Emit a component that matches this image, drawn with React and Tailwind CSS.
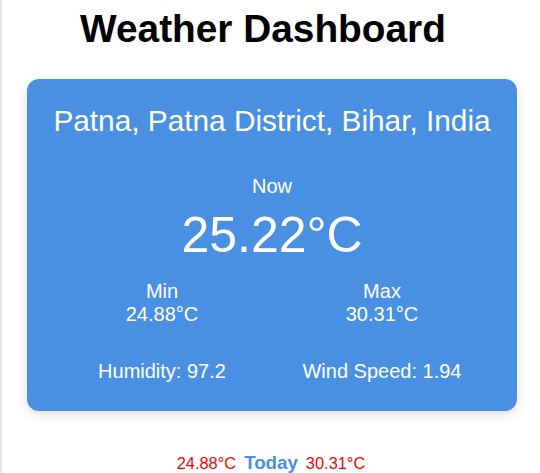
import React from "react";

const weather = {
  location: "Patna, Patna District, Bihar, India",
  temp: "25.22°C",
  min: "24.88°C",
  max: "30.31°C",
  humidity: "97.2",
  wind: "1.94",
};

const Stat = ({ label, value }) => (
  <div className="flex flex-col items-center text-[20px] leading-[1.15]">
    <span>{label}</span>
    <span>{value}</span>
  </div>
);

export default function App() {
  return (
    <div
      className="min-h-screen bg-white border-l-2 border-[#e6e6e6]"
      style={{ fontFamily: '"Liberation Sans", Arial, sans-serif' }}
    >
      <h1 className="pt-[7px] pr-[16px] text-center text-[38.8px] leading-[1.15] font-bold text-black">
        Weather Dashboard
      </h1>

      <div className="mt-[27px] ml-[25px] mr-[23px] rounded-xl bg-[#4a90e2] px-[20px] pt-[25px] pb-[28px] text-white shadow-[0_4px_12px_rgba(0,0,0,0.12)]">
        <h2 className="whitespace-nowrap text-center text-[29.8px] leading-[1.15]">{weather.location}</h2>

        <div className="mt-[37px] flex flex-col items-center">
          <p className="text-[20px] leading-[1.15]">Now</p>
          <p className="mt-[9px] text-[50px] leading-[1.15]">{weather.temp}</p>
        </div>

        <div className="mt-[16px] grid grid-cols-2 px-[5px]">
          <Stat label="Min" value={weather.min} />
          <Stat label="Max" value={weather.max} />
        </div>

        <div className="mt-[34px] grid grid-cols-2 px-[5px] text-[20px] leading-[1.15] text-center">
          <span>Humidity: {weather.humidity}</span>
          <span>Wind Speed: {weather.wind}</span>
        </div>
      </div>

      <div className="mt-[38px] flex items-baseline justify-center gap-[8px]">
        <span className="text-[16.4px] text-[#ff0000]">{weather.min}</span>
        <span className="text-[18.72px] font-bold text-[#4a90e2]">Today</span>
        <span className="text-[16.4px] text-[#ff0000]">{weather.max}</span>
      </div>
    </div>
  );
}
